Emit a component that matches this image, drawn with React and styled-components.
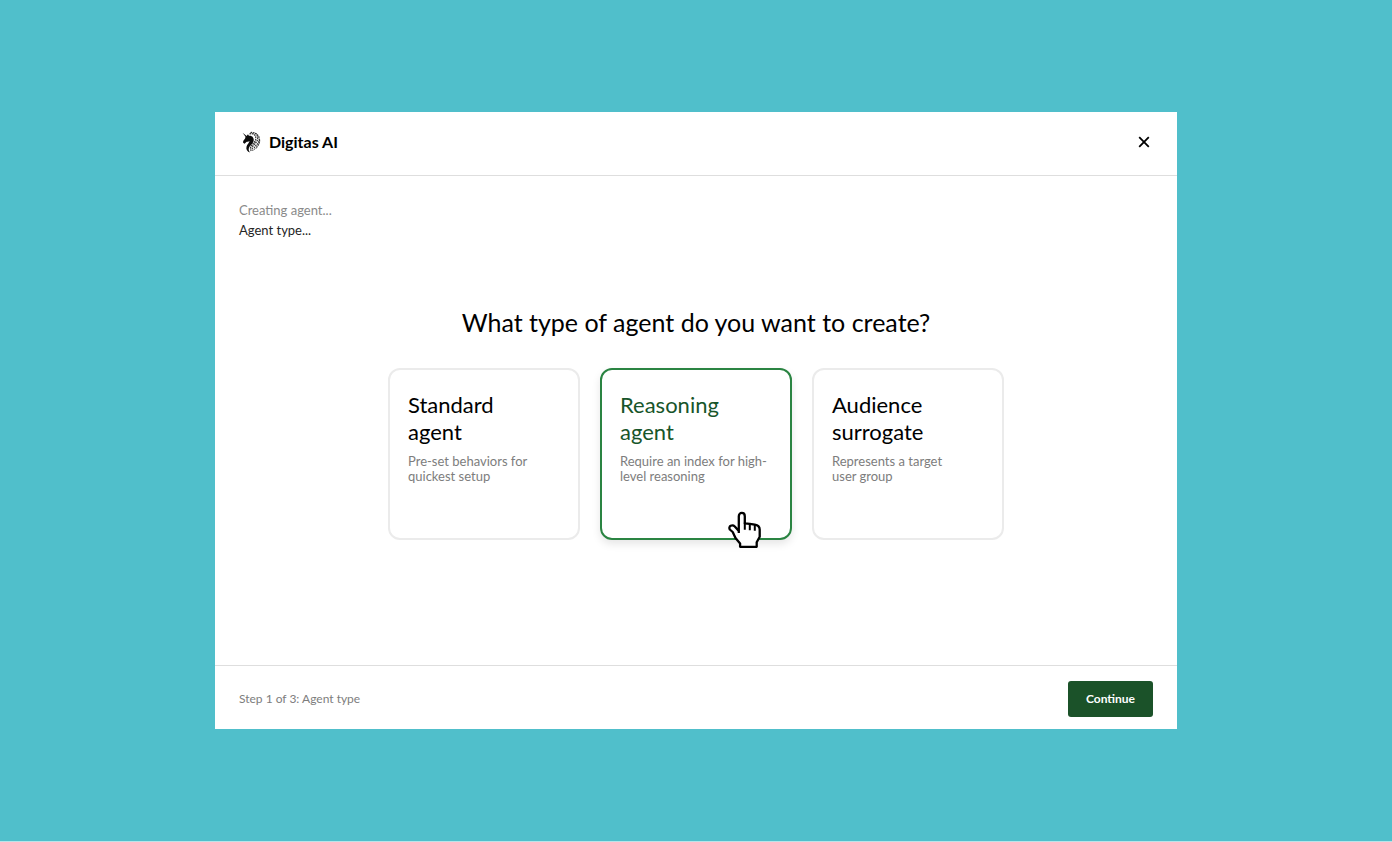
import { useState } from "react";
import styled, { createGlobalStyle } from "styled-components";

const GlobalStyle = createGlobalStyle`
  * {
    box-sizing: border-box;
  }

  body {
    margin: 0;
    background-color: #50bfcb;
    color: #000;
    font-family: Avenir, Lato, sans-serif;
  }
`;

const Page = styled.div`
  min-height: 100vh;
  display: flex;
  align-items: center;
  justify-content: center;
  padding: 24px;
  border-bottom: 1px solid #b9e4e9;
`;

const Dialog = styled.section`
  width: 100%;
  max-width: 962px;
  background-color: #fff;
`;

const Header = styled.header`
  display: flex;
  align-items: center;
  justify-content: space-between;
  padding: 16px 24px 20px;
  border-bottom: 1px solid #dedede;
`;

const Brand = styled.div`
  display: flex;
  align-items: center;
  gap: 6px;
`;

const BrandName = styled.h1`
  margin: 0;
  font-size: 16px;
  line-height: 27px;
  font-weight: 700;
`;

const CloseButton = styled.button`
  display: flex;
  padding: 1px;
  border: none;
  background-color: transparent;
  cursor: pointer;
`;

const Main = styled.main`
  padding: 24px 24px 125px;
`;

const Log = styled.p`
  margin: 0;
  font-size: 13px;
  line-height: 20px;
  color: ${(props) => (props.$active ? "#262626" : "#8a8a8a")};
`;

const Question = styled.h2`
  margin: 66px 0 30px;
  font-size: 25px;
  line-height: 32px;
  font-weight: 400;
  text-align: center;
`;

const Options = styled.div`
  display: grid;
  grid-template-columns: repeat(auto-fit, 192px);
  justify-content: center;
  gap: 20px;
`;

const Card = styled.label`
  position: relative;
  min-height: 172px;
  padding: 21px 18px;
  border: 2px solid ${(props) => (props.$selected ? "#2a8442" : "#ebebeb")};
  border-radius: 12px;
  box-shadow: ${(props) =>
    props.$selected ? "0 4px 8px rgba(0, 0, 0, 0.1)" : "none"};
  cursor: pointer;
`;

const Radio = styled.input`
  position: absolute;
  inset: 0;
  margin: 0;
  opacity: 0;
  cursor: pointer;
`;

const CardTitle = styled.span`
  display: block;
  max-width: 110px;
  font-size: 22px;
  line-height: 27px;
  color: ${(props) => (props.$selected ? "#17552a" : "#000")};
`;

const CardText = styled.span`
  display: block;
  max-width: ${(props) => (props.$narrow ? "125px" : "none")};
  margin-top: 9px;
  font-size: 13px;
  line-height: 15px;
  color: #7d7d7d;
`;

const Pointer = styled.svg`
  position: absolute;
  right: 28px;
  bottom: -11px;
  pointer-events: none;
`;

const Footer = styled.footer`
  display: flex;
  align-items: center;
  justify-content: space-between;
  padding: 15px 24px 12px;
  border-top: 1px solid #dedede;
`;

const Step = styled.span`
  font-size: 12px;
  line-height: 20px;
  color: #7d7d7d;
`;

const ContinueButton = styled.button`
  padding: 8px 18px;
  border: none;
  border-radius: 3px;
  background-color: #1b5229;
  color: #fff;
  font-family: inherit;
  font-size: 12px;
  line-height: 20px;
  font-weight: 700;
  cursor: pointer;
`;

const options = [
  {
    id: "standard",
    title: "Standard agent",
    text: "Pre-set behaviors for quickest setup",
  },
  {
    id: "reasoning",
    title: "Reasoning agent",
    text: "Require an index for high-level reasoning",
  },
  {
    id: "audience",
    title: "Audience surrogate",
    text: "Represents a target user group",
    narrow: true,
  },
];

const UnicornLogo = () => (
  <svg width="24" height="24" viewBox="0 0 24 24" aria-hidden="true">
    <path
      d="M3.6 2.8 7.6 6 9 4.3l.9 1.5c3.3-.4 5.1 1.9 4.8 4.8-.3 3-3.6 4.7-4.7 7.1-.7 1.7-.2 3.4 1.2 4.8-3-.9-4.4-3.2-3.7-5.8.6-2.2 2.7-3.7 3.1-5.6-1.3.8-2.6.6-3.5 1.1l-1.5 1.6-1.5-1 .1-1.7 1.9-2.7.4-1.6z"
      fill="#0a0a0a"
    />
    <g fill="none" stroke="#333" strokeWidth="1.2" strokeDasharray="1.7 .7">
      <path d="M10.5 3.8c4-.9 6.5 1.2 6.3 5-.2 4.2-4.8 5-5.3 9.2-.1 1.5.4 2.6 1.2 3.4" />
      <path d="M11.5 2.6c4.7-.8 7.8 2.3 7.1 6.6-.7 4.1-4.8 5-5.3 8.7-.1 1 .2 2 .7 2.8" />
      <path d="M16 3.2c3.8 1.5 5.2 5.2 3.7 8.8-1.2 3-4.1 3.5-4.5 6.4l.1 1.3" />
      <path d="M20.5 9.5c.4 3.5-.9 5.4-2.5 7.1l-1.2 2.2" />
    </g>
  </svg>
);

const CloseIcon = () => (
  <svg width="16" height="16" viewBox="0 0 16 16" aria-hidden="true">
    <path
      d="m3.2 3.2 9.6 9.6m0-9.6-9.6 9.6"
      fill="none"
      stroke="#000"
      strokeWidth="1.8"
    />
  </svg>
);

const HandPointer = () => (
  <Pointer width="34" height="38" viewBox="0 0 34 38" aria-hidden="true">
    <path
      d="M10.8 22V5.2c0-4.4 6-4.4 6 0v7.2l5 .4 5 .9c3.4.7 4.9 2 4.9 4.8v7.2l-3 5.5v4.6H12.1v-3.4L7.5 27l-2.8-6-2.9-2.5c-1.8-3.5 2.6-5.3 5-3l4 4.5"
      fill="#fff"
      stroke="#000"
      strokeWidth="2.3"
      strokeLinejoin="round"
    />
    <path
      d="M16.8 11.5v7.2M21.8 12.8v6.4M26.8 13.7v6"
      fill="none"
      stroke="#000"
      strokeWidth="2"
    />
  </Pointer>
);

const App = () => {
  const [selected, setSelected] = useState("reasoning");

  return (
    <Page>
      <GlobalStyle />
      <Dialog>
        <Header>
          <Brand>
            <UnicornLogo />
            <BrandName>Digitas AI</BrandName>
          </Brand>
          <CloseButton type="button" aria-label="Close">
            <CloseIcon />
          </CloseButton>
        </Header>
        <Main>
          <Log>Creating agent...</Log>
          <Log $active>Agent type...</Log>
          <Question>What type of agent do you want to create?</Question>
          <Options>
            {options.map((option) => (
              <Card
                key={option.id}
                htmlFor={option.id}
                $selected={selected === option.id}
              >
                <Radio
                  type="radio"
                  name="agent"
                  id={option.id}
                  checked={selected === option.id}
                  onChange={() => setSelected(option.id)}
                />
                <CardTitle $selected={selected === option.id}>
                  {option.title}
                </CardTitle>
                <CardText $narrow={option.narrow}>{option.text}</CardText>
                {selected === option.id && <HandPointer />}
              </Card>
            ))}
          </Options>
        </Main>
        <Footer>
          <Step>Step 1 of 3: Agent type</Step>
          <ContinueButton type="button">Continue</ContinueButton>
        </Footer>
      </Dialog>
    </Page>
  );
};

export default App;
